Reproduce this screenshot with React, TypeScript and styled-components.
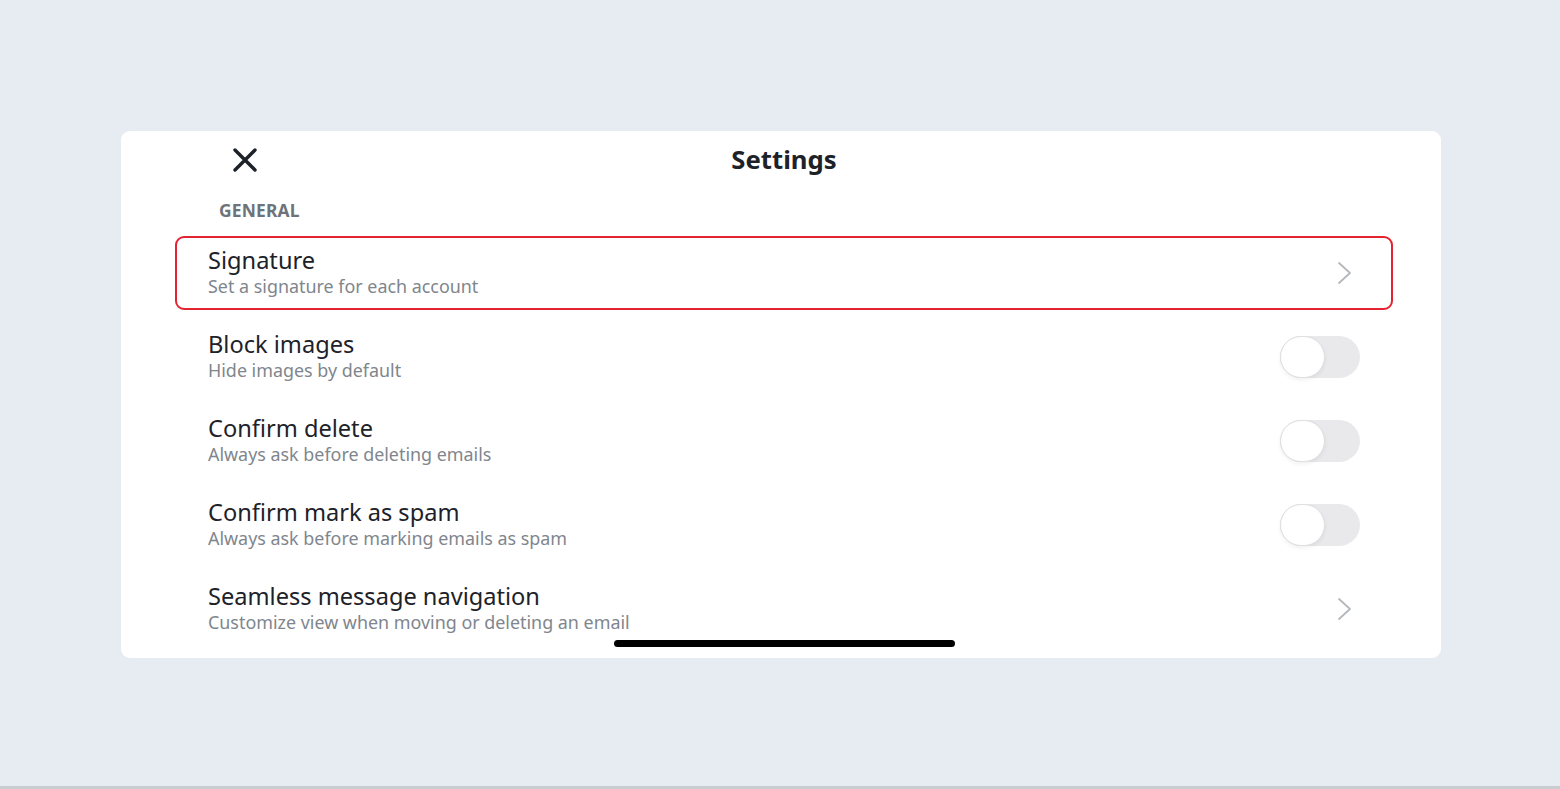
import React, { useState } from "react"
import styled, { createGlobalStyle } from "styled-components"

const GlobalStyle = createGlobalStyle`
  html, body {
    margin: 0;
    padding: 0;
    background: #e7ecf3;
    font-family: "Noto Sans", "Open Sans", Arial, sans-serif;
  }
  * { box-sizing: border-box; }
`

type Item = {
  title: string
  sub: string
  kind: "link" | "toggle"
  selected?: boolean
}

const items: Item[] = [
  { title: "Signature", sub: "Set a signature for each account", kind: "link", selected: true },
  { title: "Block images", sub: "Hide images by default", kind: "toggle" },
  { title: "Confirm delete", sub: "Always ask before deleting emails", kind: "toggle" },
  { title: "Confirm mark as spam", sub: "Always ask before marking emails as spam", kind: "toggle" },
  { title: "Seamless message navigation", sub: "Customize view when moving or deleting an email", kind: "link" },
]

function CloseIcon() {
  return (
    <svg width="26" height="26" viewBox="0 0 26 26" fill="none">
      <path d="M3 3 L23 23 M23 3 L3 23" stroke="#1d2228" strokeWidth="3.4" strokeLinecap="round" />
    </svg>
  )
}

function Chevron() {
  return (
    <svg width="17" height="24" viewBox="0 0 17 24" fill="none">
      <polyline points="3,2 14,12 3,22" stroke="#b4b8bd" strokeWidth="1.8" strokeLinecap="round" strokeLinejoin="round" />
    </svg>
  )
}

export default function App() {
  const [toggles, setToggles] = useState<Record<string, boolean>>({})

  return (
    <>
      <GlobalStyle />
      <Page>
        <Card>
          <Header>
            <CloseButton aria-label="Close">
              <CloseIcon />
            </CloseButton>
            <Title>Settings</Title>
          </Header>
          <SectionLabel>GENERAL</SectionLabel>
          <List>
            {items.map((it) => (
              <Row key={it.title} $selected={it.selected}>
                <Texts>
                  <RowTitle>{it.title}</RowTitle>
                  <RowSub>{it.sub}</RowSub>
                </Texts>
                {it.kind === "link" ? (
                  <ChevronBox>
                    <Chevron />
                  </ChevronBox>
                ) : (
                  <Switch
                    $on={!!toggles[it.title]}
                    onClick={() => setToggles({ ...toggles, [it.title]: !toggles[it.title] })}
                  >
                    <Knob $on={!!toggles[it.title]} />
                  </Switch>
                )}
              </Row>
            ))}
          </List>
          <HomeBar />
        </Card>
      </Page>
    </>
  )
}

const Page = styled.div`
  width: 1560px;
  height: 789px;
  padding: 131px 119px 0 121px;
  background: #e7ecf3;
  border-bottom: 3px solid #c9cdd2;
`

const Card = styled.div`
  position: relative;
  width: 1320px;
  height: 527px;
  background: #fff;
  border-radius: 9px;
  padding: 0 48px 0 54px;
`

const Header = styled.div`
  position: relative;
  height: 58px;
  display: flex;
  align-items: center;
  justify-content: center;
`

const CloseButton = styled.button`
  position: absolute;
  left: 57px;
  top: 16px;
  background: none;
  border: none;
  padding: 0;
  display: flex;
  cursor: pointer;
`

const Title = styled.h1`
  margin: 0;
  font-size: 25.7px;
  line-height: 32px;
  font-weight: 700;
  color: #1d2228;
`

const SectionLabel = styled.div`
  margin: 11px 0 0 44px;
  height: 20px;
  line-height: 20px;
  font-size: 17.4px;
  font-weight: 700;
  color: #6e7379;
  letter-spacing: 0.2px;
`

const List = styled.div`
  margin-top: 16px;
  display: flex;
  flex-direction: column;
  gap: 10px;
`

const Row = styled.div<{ $selected?: boolean }>`
  height: 74px;
  display: flex;
  align-items: center;
  justify-content: space-between;
  padding: 0 31px 0 31px;
  border: 2px solid ${(p) => (p.$selected ? "#e3232f" : "transparent")};
  border-radius: 9px;
  cursor: pointer;
`

const Texts = styled.div`
  display: flex;
  flex-direction: column;
  padding-bottom: 2px;
`

const RowTitle = styled.div`
  font-size: 23.6px;
  line-height: 28px;
  color: #1d2228;
`

const RowSub = styled.div`
  font-size: 17.9px;
  line-height: 24px;
  color: #80868d;
`

const ChevronBox = styled.div`
  display: flex;
  margin-right: 7px;
`

const Switch = styled.div<{ $on: boolean }>`
  position: relative;
  width: 80px;
  height: 42px;
  border-radius: 21px;
  background: ${(p) => (p.$on ? "#0f69ff" : "#e9e9eb")};
  cursor: pointer;
`

const Knob = styled.div<{ $on: boolean }>`
  position: absolute;
  top: 0;
  left: ${(p) => (p.$on ? "35px" : "0")};
  width: 45px;
  height: 42px;
  border-radius: 21px;
  background: #fff;
  border: 1.5px solid #dedfe1;
  box-shadow: 0 2px 4px rgba(0, 0, 0, 0.06);
`

const HomeBar = styled.div`
  position: absolute;
  left: 493px;
  bottom: 11px;
  width: 341px;
  height: 7px;
  border-radius: 4px;
  background: #000;
`
